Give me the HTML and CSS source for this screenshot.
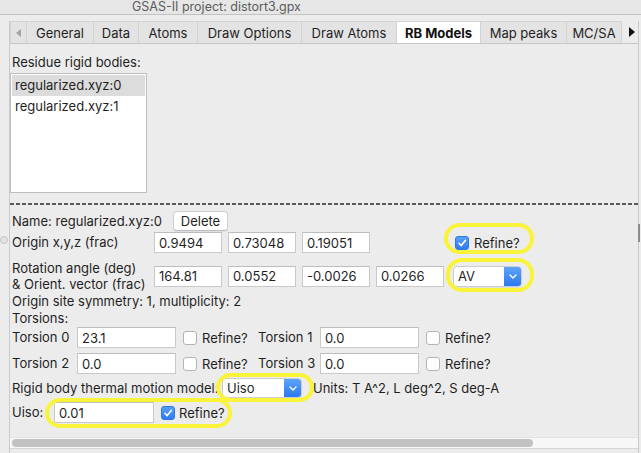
FILE: index.html
```html
<!DOCTYPE html>
<html>
<head>
<meta charset="utf-8">
<title>GSAS-II project: distort3.gpx</title>
<link rel="stylesheet" href="styles.css">
</head>
<body>
<div class="titlebar">GSAS-II project: distort3.gpx</div>
<div class="window">
  <span class="sash"></span>
  <span class="vthumb"></span>
  <div class="frame">
    <div class="tabs">
      <div class="tab-arrow"><svg width="5" height="8" viewBox="0 0 5 8"><polygon points="5,0 5,8 0,4" fill="#a3a3a3"/></svg></div>
      <div class="tab">General</div>
      <div class="tab">Data</div>
      <div class="tab">Atoms</div>
      <div class="tab">Draw Options</div>
      <div class="tab">Draw Atoms</div>
      <div class="tab active">RB Models</div>
      <div class="tab">Map peaks</div>
      <div class="tab">MC/SA</div>
      <div class="tab-arrow right"><svg width="6" height="10" viewBox="0 0 6 10"><polygon points="0,0 6,5 0,10" fill="#111"/></svg></div>
    </div>

    <div class="page">
      <div class="text heading">Residue rigid bodies:</div>
      <div class="listbox">
        <div class="item sel">regularized.xyz:0</div>
        <div class="item">regularized.xyz:1</div>
      </div>
      <div class="dash"></div>

      <div class="name-row">
        <span class="text">Name: regularized.xyz:0</span>
        <button class="btn">Delete</button>
      </div>

      <div class="vec-row origin-row">
        <span class="text">Origin x,y,z (frac)</span>
        <input class="field" type="text" value="0.9494">
        <input class="field" type="text" value="0.73048">
        <input class="field" type="text" value="0.19051">
        <span></span>
        <label class="check-cell origin-check">
          <span class="cb on"><svg width="10" height="10" viewBox="0 0 10 10"><path d="M2 5.3 L4.2 7.6 L8.3 2.4" fill="none" stroke="#fff" stroke-width="1.6" stroke-linecap="round" stroke-linejoin="round"/></svg></span>
          <span>Refine?</span>
        </label>
        <span class="hl hl-origin"></span>
      </div>

      <div class="vec-row rot-row">
        <span class="text two-line">Rotation angle (deg)<br>&amp; Orient. vector (frac)</span>
        <input class="field" type="text" value="164.81">
        <input class="field" type="text" value="0.0552">
        <input class="field" type="text" value="-0.0026">
        <input class="field" type="text" value="0.0266">
        <div class="select av-select">
          <span class="sel-val">AV</span>
          <span class="sel-btn"><svg width="8" height="5" viewBox="0 0 8 5"><polyline points="1,1 4,4 7,1" fill="none" stroke="#fff" stroke-width="1.4" stroke-linecap="round" stroke-linejoin="round"/></svg></span>
        </div>
        <span class="hl hl-av"></span>
      </div>

      <div class="text line sym">Origin site symmetry: 1, multiplicity: 2</div>
      <div class="text line">Torsions:</div>

      <div class="tors-row">
        <span class="text">Torsion 0</span>
        <input class="field" type="text" value="23.1">
        <label class="check-cell tors-check"><span class="cb"></span><span>Refine?</span></label>
        <span class="text">Torsion 1</span>
        <input class="field" type="text" value="0.0">
        <label class="check-cell tors-check"><span class="cb"></span><span>Refine?</span></label>
      </div>

      <div class="tors-row second">
        <span class="text">Torsion 2</span>
        <input class="field" type="text" value="0.0">
        <label class="check-cell tors-check"><span class="cb"></span><span>Refine?</span></label>
        <span class="text">Torsion 3</span>
        <input class="field" type="text" value="0.0">
        <label class="check-cell tors-check"><span class="cb"></span><span>Refine?</span></label>
      </div>

      <div class="therm-row">
        <span class="text">Rigid body thermal motion model:</span>
        <div class="select uiso-select">
          <span class="sel-val">Uiso</span>
          <span class="sel-btn"><svg width="8" height="5" viewBox="0 0 8 5"><polyline points="1,1 4,4 7,1" fill="none" stroke="#fff" stroke-width="1.4" stroke-linecap="round" stroke-linejoin="round"/></svg></span>
        </div>
        <span class="units">Units: T A^2, L deg^2, S deg-A</span>
        <span class="hl hl-therm"></span>
      </div>

      <div class="uiso-row">
        <span class="text">Uiso:</span>
        <input class="field" type="text" value="0.01">
        <label class="check-cell uiso-check">
          <span class="cb on"><svg width="10" height="10" viewBox="0 0 10 10"><path d="M2 5.3 L4.2 7.6 L8.3 2.4" fill="none" stroke="#fff" stroke-width="1.6" stroke-linecap="round" stroke-linejoin="round"/></svg></span>
          <span>Refine?</span>
        </label>
        <span class="hl hl-uiso"></span>
      </div>

      <div class="hscroll"><div class="hthumb"></div></div>
    </div>
  </div>
</div>
</body>
</html>
```

FILE: styles.css
```css
html, body {
  margin: 0;
  padding: 0;
}

body {
  width: 641px;
  height: 453px;
  overflow: hidden;
  background: #ececec;
  font-family: Inter, "Liberation Sans", sans-serif;
  font-size: 13px;
  color: #1f1f1f;
}

.titlebar {
  height: 14px;
  box-sizing: content-box;
  border-bottom: 1px solid #c2c2c2;
  background: #e6e6e6;
  padding-left: 132px;
  font-size: 12.5px;
  line-height: 13px;
  color: #5c5c5c;
  white-space: nowrap;
}

.window {
  position: relative;
}

.sash {
  position: absolute;
  left: 0;
  top: 215px;
  width: 6px;
  height: 6px;
  border-radius: 50%;
  background: #e2e2e2;
  border: 1px solid #c6c6c6;
}

.vthumb {
  position: absolute;
  left: 638px;
  top: 203px;
  width: 2px;
  height: 18px;
  background: #8c8c8c;
}

.frame {
  margin-left: 9px;
  width: 630px;
  height: 438px;
  box-sizing: border-box;
  border-left: 1px solid #cacaca;
  border-right: 1px solid #cacaca;
}

/* tabs */
.tabs {
  display: grid;
  grid-template-columns: 17px 67px 45px 59px 104px 95px 84px 86px 55px 1fr;
  margin-top: 6px;
  height: 22px;
  border-bottom: 1px solid #c6c6c6;
}

.tab,
.tab-arrow {
  display: flex;
  align-items: center;
  justify-content: center;
  background: #e3e3e3;
  border-top: 1px solid #d3d3d3;
  border-right: 1px solid #d3d3d3;
  white-space: nowrap;
}

.tab-arrow {
  border-left: 1px solid #d3d3d3;
}

.tab-arrow.right {
  background: transparent;
  border: none;
  justify-content: flex-start;
  padding-left: 7px;
}

.tab.active {
  background: #ffffff;
  font-weight: 700;
  color: #111;
}

/* page */
.page {
  position: relative;
}

.text {
  padding-left: 2px;
  line-height: 17px;
  white-space: nowrap;
}

.heading {
  padding-top: 10px;
}

.listbox {
  margin-top: 2px;
  width: 137px;
  height: 120px;
  box-sizing: border-box;
  border: 1px solid #bebebe;
  background: #fff;
  padding: 1px;
}

.item {
  height: 21px;
  line-height: 21px;
  padding-left: 3px;
  white-space: nowrap;
}

.item.sel {
  background: #dcdcdc;
}

.dash {
  margin-top: 10px;
  height: 2px;
  background: repeating-linear-gradient(90deg, #5a5a5a 0 4px, transparent 4px 6px);
}

.name-row {
  display: grid;
  grid-template-columns: 163px 55px;
  align-items: center;
  margin-top: 6px;
  height: 20px;
}

.btn {
  height: 20px;
  width: 55px;
  box-sizing: border-box;
  padding: 0;
  font: inherit;
  color: #1f1f1f;
  background: #fff;
  border: 1px solid #d0d0d0;
  border-bottom-color: #bcbcbc;
  border-radius: 4px;
  box-shadow: 0 1px 1px rgba(0, 0, 0, 0.06);
}

.field {
  box-sizing: border-box;
  width: 100%;
  height: 21px;
  margin: 0;
  padding: 0 4px;
  font: inherit;
  color: #1f1f1f;
  background: #fff;
  border: 1px solid #c9c9c9;
  border-top-color: #bdbdbd;
  border-radius: 0;
  outline: none;
}

.vec-row {
  position: relative;
  display: grid;
  grid-template-columns: 138px 68px 68px 68px 68px auto;
  column-gap: 6px;
  align-items: center;
}

.origin-row {
  margin-top: 1px;
  height: 21px;
}

.rot-row {
  margin-top: 7px;
  height: 32px;
}

.two-line {
  line-height: 16px;
}

.check-cell {
  display: flex;
  align-items: center;
  gap: 5px;
  white-space: nowrap;
}

.origin-check {
  margin-left: 5px;
}

.tors-check,
.uiso-check {
  margin-left: 7px;
}

.uiso-check {
  gap: 4px;
}

.cb {
  flex: none;
  width: 14px;
  height: 14px;
  box-sizing: border-box;
  display: inline-flex;
  align-items: center;
  justify-content: center;
  background: #fff;
  border: 1px solid #b4b4b4;
  border-radius: 3px;
}

.cb.on {
  background: linear-gradient(#58a0fa, #2f7cf1);
  border-color: #2e76e2;
}

.select {
  display: flex;
  box-sizing: border-box;
  height: 21px;
  background: #fff;
  border: 1px solid #cdcdcd;
  border-radius: 4px;
  overflow: hidden;
  box-shadow: 0 1px 1px rgba(0, 0, 0, 0.06);
}

.av-select {
  width: 69px;
  margin-left: 3px;
}

.sel-val {
  flex: 1;
  padding-left: 4px;
  line-height: 19px;
}

.sel-btn {
  width: 17px;
  display: flex;
  align-items: center;
  justify-content: center;
  background: linear-gradient(#5ca4fb, #2b79f0);
}

.line {
  line-height: 17px;
}

.sym {
  margin-top: 1px;
}

.tors-row {
  display: grid;
  grid-template-columns: 67px 99px 80px 64px 99px auto;
  align-items: center;
  height: 21px;
}

.tors-row.second {
  margin-top: 5px;
}

.therm-row {
  position: relative;
  display: grid;
  grid-template-columns: 212px 80px auto;
  align-items: center;
  height: 20px;
  margin-top: 4px;
}

.uiso-select {
  width: 80px;
  height: 20px;
}

.uiso-select .sel-val {
  line-height: 18px;
}

.units {
  margin-left: 11px;
  white-space: nowrap;
}

.uiso-row {
  position: relative;
  display: grid;
  grid-template-columns: 44px 100px auto;
  align-items: center;
  height: 21px;
  margin-top: 4px;
}

/* yellow annotation rings */
.hl {
  position: absolute;
  box-sizing: border-box;
  border: 4px solid #f9f43a;
  border-radius: 16px;
  pointer-events: none;
}

.hl-origin {
  left: 434px;
  top: -9px;
  width: 90px;
  height: 31px;
}

.hl-av {
  left: 436px;
  top: -2px;
  width: 88px;
  height: 34px;
}

.hl-therm {
  left: 206px;
  top: -5px;
  width: 98px;
  height: 29px;
}

.hl-uiso {
  left: 35px;
  top: -4px;
  width: 187px;
  height: 30px;
}

/* horizontal scrollbar */
.hscroll {
  margin-top: 14px;
  height: 12px;
  box-sizing: border-box;
  background: #f7f7f7;
  border-top: 1px solid #e3e3e3;
  border-bottom: 1px solid #d6d6d6;
  padding: 1px 0 0 2px;
}

.hthumb {
  width: 521px;
  height: 8px;
  border-radius: 4px;
  background: #c2c2c2;
}
```
